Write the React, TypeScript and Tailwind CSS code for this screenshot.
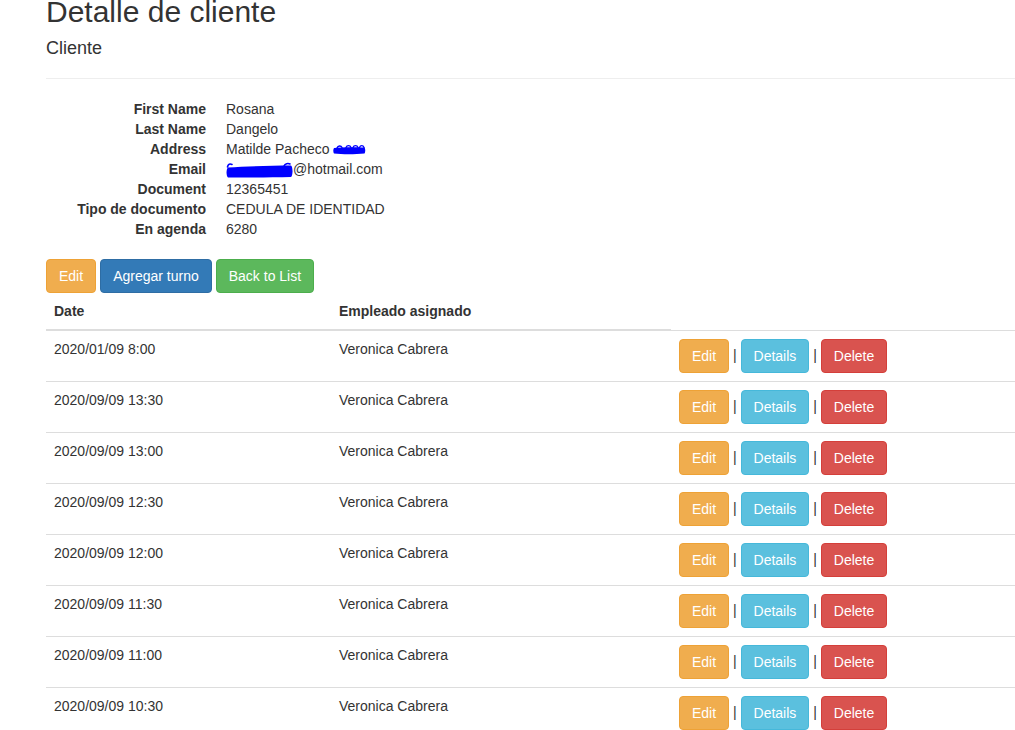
import React from 'react'

const CLIENT = [
  { label: 'First Name', value: 'Rosana' },
  { label: 'Last Name', value: 'Dangelo' },
  { label: 'Address', value: 'address' },
  { label: 'Email', value: 'email' },
  { label: 'Document', value: '12365451' },
  { label: 'Tipo de documento', value: 'CEDULA DE IDENTIDAD' },
  { label: 'En agenda', value: '6280' },
]

const TURNOS = [
  '2020/01/09 8:00',
  '2020/09/09 13:30',
  '2020/09/09 13:00',
  '2020/09/09 12:30',
  '2020/09/09 12:00',
  '2020/09/09 11:30',
  '2020/09/09 11:00',
  '2020/09/09 10:30',
]

const btn = 'inline-block px-[12px] py-[6px] border rounded-[4px] text-white text-[14px] leading-[20px] align-middle'

// tachones azules sobre datos privados
function AddressScribble() {
  return (
    <svg width="33" height="20" viewBox="0 0 33 20" className="inline-block align-top">
      <path d="M1 9 C 8 8, 22 8, 31.5 8.5 C 32.5 10, 32.5 13, 31.5 14.5 C 22 15.5, 9 15.5, 1 14.5 C 0 13, 0 10.5, 1 9 Z" fill="#0000ff" />
      <path d="M4 9 C 5 6.5, 8 6.5, 9 8.5 M13 8.5 C 14 6, 17 6, 18 8.5 M20 8.5 C 21 6, 24 6, 25 8.5 M26.5 8.5 C 27.5 6, 30 6, 31 8.5" stroke="#0000ff" strokeWidth="1.4" fill="none" strokeLinecap="round" />
    </svg>
  )
}

function EmailScribble() {
  return (
    <svg width="67" height="20" viewBox="0 0 67 20" className="inline-block align-top">
      <path d="M2 8.5 C 20 7.5, 45 6.5, 65 6.5 C 67 8, 67 16.5, 65 18 C 45 18.5, 20 18.5, 2 18.5 C 0 17, 0 10, 2 8.5 Z" fill="#0000ff" />
      <path d="M1.5 8 C 2 5, 4 4.5, 6 5.5 M58 7 C 59 4.5, 62 4, 64 5" stroke="#0000ff" strokeWidth="1.6" fill="none" strokeLinecap="round" />
    </svg>
  )
}

function Value({ value }: { value: string }) {
  if (value === 'address') return <>Matilde Pacheco <AddressScribble /></>
  if (value === 'email') return <><EmailScribble />@hotmail.com</>
  return <>{value}</>
}

export default function App() {
  return (
    <div className="w-[1015px] h-[730px] overflow-hidden bg-white text-[#333] text-[14px] leading-[20px] font-['Liberation_Sans',Arial,sans-serif]">
      <div className="pl-[46px] w-[1186px]">
        {/* Encabezado */}
        <h2 className="text-[30px] leading-[33px] mt-[-5px]">Detalle de cliente</h2>
        <h4 className="text-[18px] leading-[20px] mt-[10px]">Cliente</h4>
        <hr className="mt-[20px] mb-[20px] border-t border-[#eee]" />

        {/* Datos del cliente */}
        <dl className="flex flex-col">
          {CLIENT.map(row => (
            <div key={row.label} className="flex h-[20px]">
              <dt className="w-[160px] text-right font-bold whitespace-nowrap">{row.label}</dt>
              <dd className="ml-[20px] whitespace-nowrap"><Value value={row.value} /></dd>
            </div>
          ))}
        </dl>

        <div className="mt-[20px] flex gap-[4px]">
          <a className={`${btn} bg-[#f0ad4e] border-[#eea236]`}>Edit</a>
          <a className={`${btn} bg-[#337ab7] border-[#2e6da4]`}>Agregar turno</a>
          <a className={`${btn} bg-[#5cb85c] border-[#4cae4c]`}>Back to List</a>
        </div>

        {/* Turnos */}
        <table className="w-[1140px] border-collapse table-fixed">
          <thead>
            <tr>
              <th className="w-[285px] p-[8px] text-left font-bold border-b-2 border-[#ddd]">Date</th>
              <th className="w-[340px] p-[8px] text-left font-bold border-b-2 border-[#ddd]">Empleado asignado</th>
            </tr>
          </thead>
          <tbody>
            {TURNOS.map(date => (
              <tr key={date}>
                <td className="p-[8px] align-top border-t border-[#ddd]">{date}</td>
                <td className="p-[8px] align-top border-t border-[#ddd]">Veronica Cabrera</td>
                <td className="p-[8px] align-top border-t border-[#ddd] whitespace-nowrap">
                  <a className={`${btn} bg-[#f0ad4e] border-[#eea236]`}>Edit</a>
                  {' | '}
                  <a className={`${btn} bg-[#5bc0de] border-[#46b8da]`}>Details</a>
                  {' | '}
                  <a className={`${btn} bg-[#d9534f] border-[#d43f3a]`}>Delete</a>
                </td>
              </tr>
            ))}
          </tbody>
        </table>
      </div>
    </div>
  )
}
